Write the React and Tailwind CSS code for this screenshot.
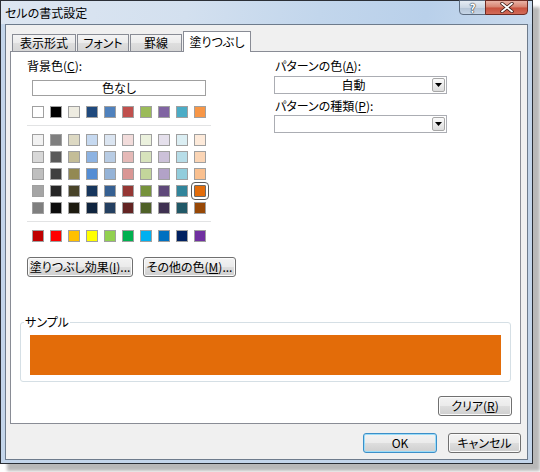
import React from "react";

const THEME = ["bg-[#ffffff]", "bg-[#000000]", "bg-[#eeece1]", "bg-[#1f497d]", "bg-[#4f81bd]", "bg-[#c0504d]", "bg-[#9bbb59]", "bg-[#8064a2]", "bg-[#4bacc6]", "bg-[#f79646]"];

const TINTS = [
  ["bg-[#f2f2f2]", "bg-[#7f7f7f]", "bg-[#ddd9c3]", "bg-[#c6d9f0]", "bg-[#dbe5f1]", "bg-[#f2dcdb]", "bg-[#ebf1dd]", "bg-[#e5e0ec]", "bg-[#dbeef3]", "bg-[#fdeada]"],
  ["bg-[#d8d8d8]", "bg-[#595959]", "bg-[#c4bd97]", "bg-[#8db3e2]", "bg-[#b8cce4]", "bg-[#e5b9b7]", "bg-[#d7e3bc]", "bg-[#ccc1d9]", "bg-[#b7dde8]", "bg-[#fbd5b5]"],
  ["bg-[#bfbfbf]", "bg-[#3f3f3f]", "bg-[#938953]", "bg-[#548dd4]", "bg-[#95b3d7]", "bg-[#d99694]", "bg-[#c3d69b]", "bg-[#b2a2c7]", "bg-[#92cddc]", "bg-[#fac08f]"],
  ["bg-[#a5a5a5]", "bg-[#262626]", "bg-[#494429]", "bg-[#17365d]", "bg-[#366092]", "bg-[#953734]", "bg-[#76923c]", "bg-[#5f497a]", "bg-[#31859b]", "bg-[#e36c09]"],
  ["bg-[#7f7f7f]", "bg-[#0c0c0c]", "bg-[#1d1b10]", "bg-[#0f243e]", "bg-[#244061]", "bg-[#632423]", "bg-[#4f6128]", "bg-[#3f3151]", "bg-[#205867]", "bg-[#974806]"],
];

const STANDARD = ["bg-[#c00000]", "bg-[#ff0000]", "bg-[#ffc000]", "bg-[#ffff00]", "bg-[#92d050]", "bg-[#00b050]", "bg-[#00b0f0]", "bg-[#0070c0]", "bg-[#002060]", "bg-[#7030a0]"];

function Swatch({ bg, selected }) {
  return (
    <div
      className={`w-3 h-3 border ${bg} ${
        selected
          ? "border-[#6b6b6b] rounded-[1px] outline outline-1 outline-offset-[2px] outline-[#5a5a5a]"
          : "border-[#a0a0a0]"
      }`}
    />
  );
}

function SwatchRow({ colors, selectedIndex = -1 }) {
  return (
    <div className="flex gap-[6px]">
      {colors.map((c, i) => (
        <Swatch key={i} bg={c} selected={i === selectedIndex} />
      ))}
    </div>
  );
}

function WinButton({ className = "", isDefault = false, children }) {
  return (
    <button
      type="button"
      className={`h-[20px] rounded-[3px] border leading-[16px] flex items-center justify-center bg-[linear-gradient(180deg,#f3f3f3_0%,#ebebeb_48%,#dddddd_52%,#cfcfcf_100%)] ${
        isDefault
          ? "border-[#3c8fc8] shadow-[inset_0_0_0_1px_#9bdcf8]"
          : "border-[#707070] shadow-[inset_0_0_0_1px_#fbfbfb]"
      } ${className}`}
    >
      {children}
    </button>
  );
}

function Dropdown({ value = "", className = "" }) {
  return (
    <div className={`w-[173px] h-[18px] border border-[#abadb3] bg-white flex items-center ${className}`}>
      <span className="flex-1 text-center leading-[16px]">{value}</span>
      <div className="w-[13px] h-[14px] mr-px rounded-[2px] border border-[#a7a7a7] bg-[linear-gradient(180deg,#fbfbfb_0%,#ececec_50%,#dcdcdc_100%)] flex items-center justify-center">
        <svg width="7" height="4" viewBox="0 0 7 4">
          <path d="M0 0h7L3.5 4z" fill="#000" />
        </svg>
      </div>
    </div>
  );
}

function Tab({ label, active = false, width }) {
  return active ? (
    <div className={`relative z-10 -mb-px h-[21px] ${width} border border-b-0 border-[#898c95] bg-white flex items-center justify-center leading-[16px]`}>
      {label}
    </div>
  ) : (
    <div className={`h-[17px] ${width} border border-b-0 border-[#898c95] bg-[linear-gradient(180deg,#f4f4f4_0%,#ebebeb_50%,#dedede_52%,#d6d6d6_100%)] flex items-center justify-center leading-[16px]`}>
      {label}
    </div>
  );
}

export default function App() {
  return (
    <div className="w-[540px] h-[472px] bg-white font-['Noto_Sans_CJK_JP',sans-serif] [font-feature-settings:'palt'] text-[12px] leading-[16px] text-black">
      <div className="w-[533px] h-[464px] border border-[#2b2f36] bg-[#c3d5ea] flex flex-col shadow-[7px_7px_3px_rgba(0,0,0,0.28)]">
        {/* Title bar */}
        <div className="h-[23px] flex justify-between pl-[4px] pr-[4px] bg-[linear-gradient(100deg,#dde6f1_0%,#d3e0ef_35%,#c2d6ec_60%,#b9d0ea_80%,#c9daed_100%)]">
          <span className="pt-[4px]">セルの書式設定</span>
          <div className="flex -mt-px h-[15px]">
            <div className="w-[27px] border border-[#5d6c80] rounded-bl-[4px] bg-[linear-gradient(180deg,#e6edf4_0%,#cbd7e4_50%,#b4c4d6_52%,#c6d5e6_100%)] flex items-center justify-center text-white font-bold text-[12px] leading-[12px] [text-shadow:0_0_1px_#2a3440,0_0_1px_#2a3440,0_0_1px_#2a3440]">
              ?
            </div>
            <div className="w-[43px] -ml-px border border-[#6e2b23] rounded-br-[4px] bg-[linear-gradient(180deg,#eab3a6_0%,#d7826f_48%,#c8503c_52%,#d26b58_100%)] flex items-center justify-center">
              <svg width="14" height="11" viewBox="0 0 14 11">
                <path d="M2 1.5l10 8M12 1.5l-10 8" stroke="#3b1a15" strokeWidth="3.4" strokeLinecap="round" />
                <path d="M2 1.5l10 8M12 1.5l-10 8" stroke="#fff" strokeWidth="1.8" strokeLinecap="round" />
              </svg>
            </div>
          </div>
        </div>

        {/* Body */}
        <div className="mx-[4px] mb-[3px] flex-1 border border-[#6d7b8c] bg-[#f0f0f0] pl-[4px] pr-[6px] pt-[6px] flex flex-col">
          {/* Tabs */}
          <div className="h-[20px] ml-[2px] flex items-end gap-[1px]">
            <Tab label="表示形式" width="w-[64px]" />
            <Tab label="フォント" width="w-[52px]" />
            <Tab label="罫線" width="w-[52px]" />
            <Tab label="塗りつぶし" width="w-[68px]" active />
          </div>

          {/* Panel */}
          <div className="h-[373px] border border-[#898c95] bg-white flex flex-col">
            <div className="flex">
              {/* Background colour */}
              <div className="w-[263px] shrink-0 pl-[16px] pt-[6px]">
                <div>
                  背景色(<u>C</u>):
                </div>
                <div className="ml-[5px] mt-[6px]">
                  <div className="w-[174px] h-[16px] border border-[#a0a0a0] flex items-center justify-center leading-[14px]">
                    色なし
                  </div>
                  <div className="mt-[10px]">
                    <SwatchRow colors={THEME} />
                  </div>
                  <div className="mt-[7px] -ml-[5px] w-[184px] h-px bg-[#e2e3e4]" />
                  <div className="mt-[8px] flex flex-col gap-[5px]">
                    {TINTS.map((row, i) => (
                      <SwatchRow key={i} colors={row} selectedIndex={i === 3 ? 9 : -1} />
                    ))}
                  </div>
                  <div className="mt-[7px] -ml-[5px] w-[184px] h-px bg-[#e2e3e4]" />
                  <div className="mt-[8px]">
                    <SwatchRow colors={STANDARD} />
                  </div>
                </div>
                <div className="mt-[15px] flex gap-[10px]">
                  <WinButton className="w-[106px]">
                    塗りつぶし効果(<u>I</u>)...
                  </WinButton>
                  <WinButton className="w-[93px]">
                    その他の色(<u>M</u>)...
                  </WinButton>
                </div>
              </div>

              {/* Pattern */}
              <div className="pt-[6px] w-[173px]">
                <div className="pl-px">
                  パターンの色(<u>A</u>):
                </div>
                <Dropdown value="自動" className="mt-[2px]" />
                <div className="mt-[4px] pl-px">
                  パターンの種類(<u>P</u>):
                </div>
                <Dropdown className="mt-px" />
              </div>
            </div>

            {/* Sample */}
            <div className="relative mx-[9px] mt-[45px] h-[60px] border border-[#d5dfe5] rounded-[3px] pt-[12px] px-[9px]">
              <span className="absolute left-[3px] -top-[9px] bg-white px-px">サンプル</span>
              <div className="h-[40px] bg-[#e36c09]" />
            </div>

            <div className="mt-[14px] mr-[8px] flex justify-end">
              <WinButton className="w-[74px]">
                クリア(<u>R</u>)
              </WinButton>
            </div>
          </div>

          {/* Footer */}
          <div className="mt-[9px] flex justify-end gap-[11px]">
            <WinButton className="w-[74px]" isDefault>
              OK
            </WinButton>
            <WinButton className="w-[73px]">キャンセル</WinButton>
          </div>
        </div>
      </div>
    </div>
  );
}
